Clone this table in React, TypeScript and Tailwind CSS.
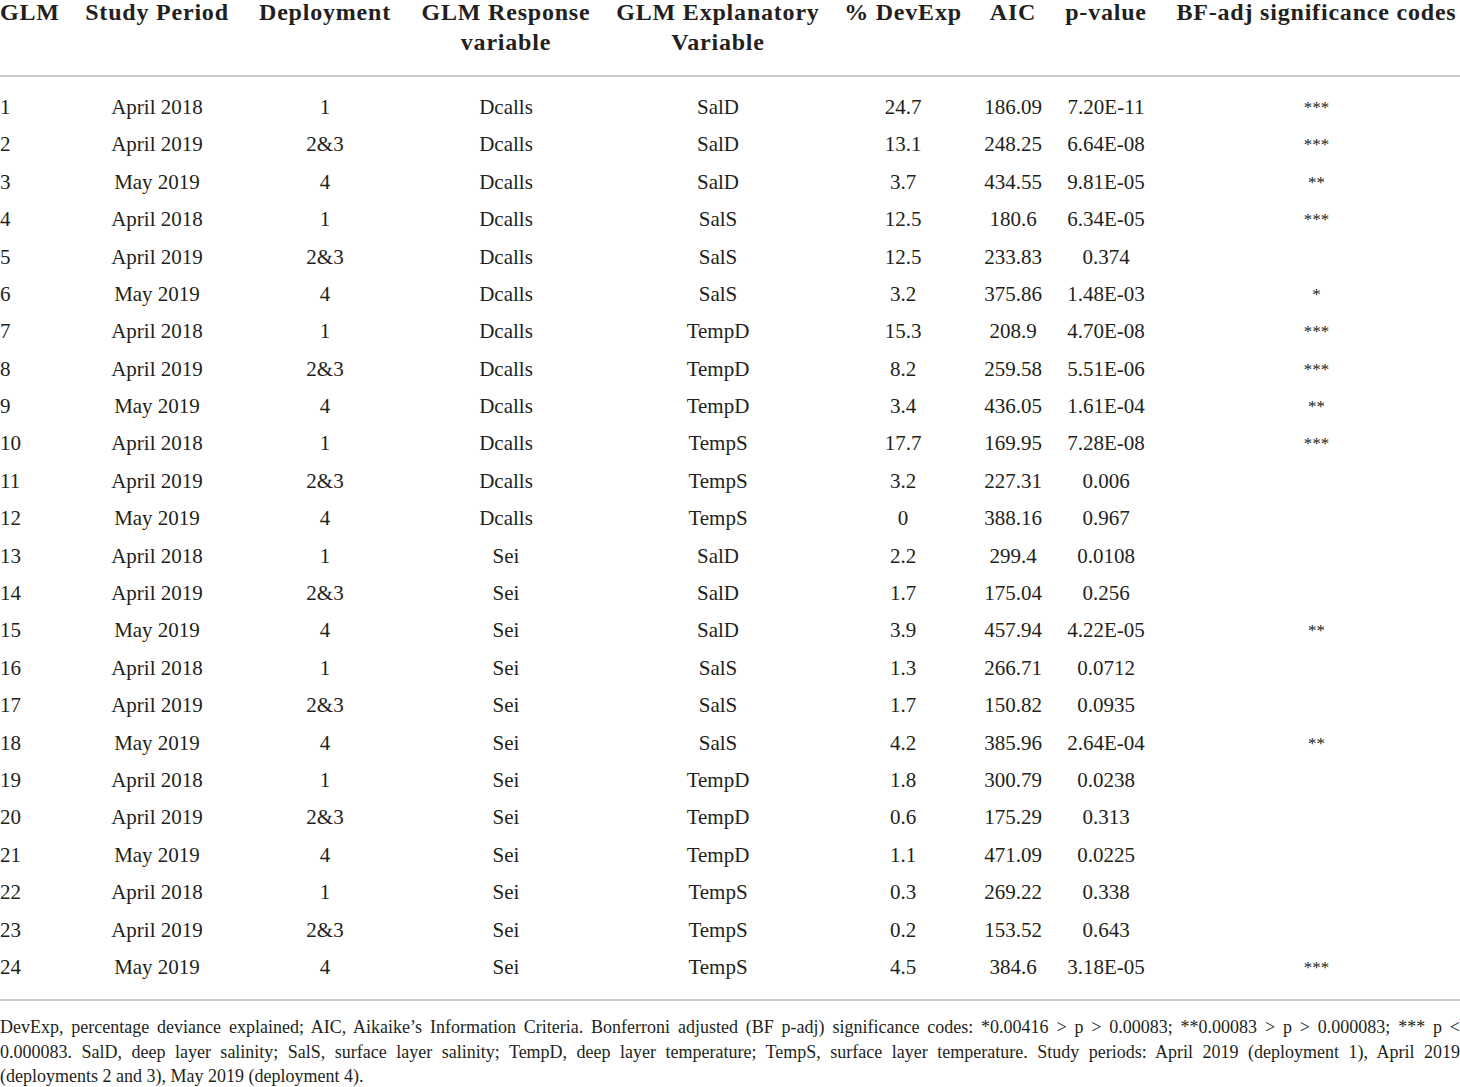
type Row = {
  glm: number;
  period: string;
  deployment: string;
  response: string;
  variable: string;
  devExp: string;
  aic: string;
  pValue: string;
  codes: string;
};

const rows: Row[] = [
  { glm: 1, period: "April 2018", deployment: "1", response: "Dcalls", variable: "SalD", devExp: "24.7", aic: "186.09", pValue: "7.20E-11", codes: "***" },
  { glm: 2, period: "April 2019", deployment: "2&3", response: "Dcalls", variable: "SalD", devExp: "13.1", aic: "248.25", pValue: "6.64E-08", codes: "***" },
  { glm: 3, period: "May 2019", deployment: "4", response: "Dcalls", variable: "SalD", devExp: "3.7", aic: "434.55", pValue: "9.81E-05", codes: "**" },
  { glm: 4, period: "April 2018", deployment: "1", response: "Dcalls", variable: "SalS", devExp: "12.5", aic: "180.6", pValue: "6.34E-05", codes: "***" },
  { glm: 5, period: "April 2019", deployment: "2&3", response: "Dcalls", variable: "SalS", devExp: "12.5", aic: "233.83", pValue: "0.374", codes: "" },
  { glm: 6, period: "May 2019", deployment: "4", response: "Dcalls", variable: "SalS", devExp: "3.2", aic: "375.86", pValue: "1.48E-03", codes: "*" },
  { glm: 7, period: "April 2018", deployment: "1", response: "Dcalls", variable: "TempD", devExp: "15.3", aic: "208.9", pValue: "4.70E-08", codes: "***" },
  { glm: 8, period: "April 2019", deployment: "2&3", response: "Dcalls", variable: "TempD", devExp: "8.2", aic: "259.58", pValue: "5.51E-06", codes: "***" },
  { glm: 9, period: "May 2019", deployment: "4", response: "Dcalls", variable: "TempD", devExp: "3.4", aic: "436.05", pValue: "1.61E-04", codes: "**" },
  { glm: 10, period: "April 2018", deployment: "1", response: "Dcalls", variable: "TempS", devExp: "17.7", aic: "169.95", pValue: "7.28E-08", codes: "***" },
  { glm: 11, period: "April 2019", deployment: "2&3", response: "Dcalls", variable: "TempS", devExp: "3.2", aic: "227.31", pValue: "0.006", codes: "" },
  { glm: 12, period: "May 2019", deployment: "4", response: "Dcalls", variable: "TempS", devExp: "0", aic: "388.16", pValue: "0.967", codes: "" },
  { glm: 13, period: "April 2018", deployment: "1", response: "Sei", variable: "SalD", devExp: "2.2", aic: "299.4", pValue: "0.0108", codes: "" },
  { glm: 14, period: "April 2019", deployment: "2&3", response: "Sei", variable: "SalD", devExp: "1.7", aic: "175.04", pValue: "0.256", codes: "" },
  { glm: 15, period: "May 2019", deployment: "4", response: "Sei", variable: "SalD", devExp: "3.9", aic: "457.94", pValue: "4.22E-05", codes: "**" },
  { glm: 16, period: "April 2018", deployment: "1", response: "Sei", variable: "SalS", devExp: "1.3", aic: "266.71", pValue: "0.0712", codes: "" },
  { glm: 17, period: "April 2019", deployment: "2&3", response: "Sei", variable: "SalS", devExp: "1.7", aic: "150.82", pValue: "0.0935", codes: "" },
  { glm: 18, period: "May 2019", deployment: "4", response: "Sei", variable: "SalS", devExp: "4.2", aic: "385.96", pValue: "2.64E-04", codes: "**" },
  { glm: 19, period: "April 2018", deployment: "1", response: "Sei", variable: "TempD", devExp: "1.8", aic: "300.79", pValue: "0.0238", codes: "" },
  { glm: 20, period: "April 2019", deployment: "2&3", response: "Sei", variable: "TempD", devExp: "0.6", aic: "175.29", pValue: "0.313", codes: "" },
  { glm: 21, period: "May 2019", deployment: "4", response: "Sei", variable: "TempD", devExp: "1.1", aic: "471.09", pValue: "0.0225", codes: "" },
  { glm: 22, period: "April 2018", deployment: "1", response: "Sei", variable: "TempS", devExp: "0.3", aic: "269.22", pValue: "0.338", codes: "" },
  { glm: 23, period: "April 2019", deployment: "2&3", response: "Sei", variable: "TempS", devExp: "0.2", aic: "153.52", pValue: "0.643", codes: "" },
  { glm: 24, period: "May 2019", deployment: "4", response: "Sei", variable: "TempS", devExp: "4.5", aic: "384.6", pValue: "3.18E-05", codes: "***" },
];

const cols = "grid grid-cols-[70px_174px_162px_200px_224px_146px_74px_112px_1fr]";

export default function App() {
  return (
    <main className="min-h-screen w-[1460px] overflow-hidden bg-white font-['Liberation_Serif',serif] text-[#231f20]">
      {/* header */}
      <div
        className={`${cols} border-b-2 border-[#cccccc] pb-[21px] text-[24px] font-bold leading-[24px] tracking-[0.8px]`}
      >
        <div className="whitespace-nowrap">GLM</div>
        <div className="text-center whitespace-nowrap">Study Period</div>
        <div className="text-center whitespace-nowrap">Deployment</div>
        <div className="text-center">
          <div>GLM Response</div>
          <div className="mt-[6px]">variable</div>
        </div>
        <div className="text-center">
          <div>GLM Explanatory</div>
          <div className="mt-[6px]">Variable</div>
        </div>
        <div className="text-center whitespace-nowrap">% DevExp</div>
        <div className="text-center whitespace-nowrap">AIC</div>
        <div className="text-center whitespace-nowrap">p-value</div>
        <div className="pl-[11px] text-center whitespace-nowrap">
          BF-adj significance codes
        </div>
      </div>

      {/* rows */}
      <div className="border-b-2 border-[#cccccc] pt-3 pb-[13px] text-[21px]">
        {rows.map((row) => (
          <div key={row.glm} className={`${cols} h-[37.4px] items-center`}>
            <div>{row.glm}</div>
            <div className="text-center">{row.period}</div>
            <div className="text-center">{row.deployment}</div>
            <div className="text-center">{row.response}</div>
            <div className="text-center">{row.variable}</div>
            <div className="text-center">{row.devExp}</div>
            <div className="text-center">{row.aic}</div>
            <div className="text-center">{row.pValue}</div>
            <div className="pl-[11px] text-center text-[17px]">{row.codes}</div>
          </div>
        ))}
      </div>

      {/* footnote */}
      <div className="pt-[14px] text-[18px] leading-[24.5px]">
        <p className="whitespace-nowrap text-justify [text-align-last:justify]">
          DevExp, percentage deviance explained; AIC, Aikaike’s Information
          Criteria. Bonferroni adjusted (BF p-adj) significance codes: *0.00416
          &gt; p &gt; 0.00083; **0.00083 &gt; p &gt; 0.000083; *** p &lt;
        </p>
        <p className="whitespace-nowrap text-justify [text-align-last:justify]">
          0.000083. SalD, deep layer salinity; SalS, surface layer salinity;
          TempD, deep layer temperature; TempS, surface layer temperature. Study
          periods: April 2019 (deployment 1), April 2019
        </p>
        <p>(deployments 2 and 3), May 2019 (deployment 4).</p>
      </div>
    </main>
  );
}
